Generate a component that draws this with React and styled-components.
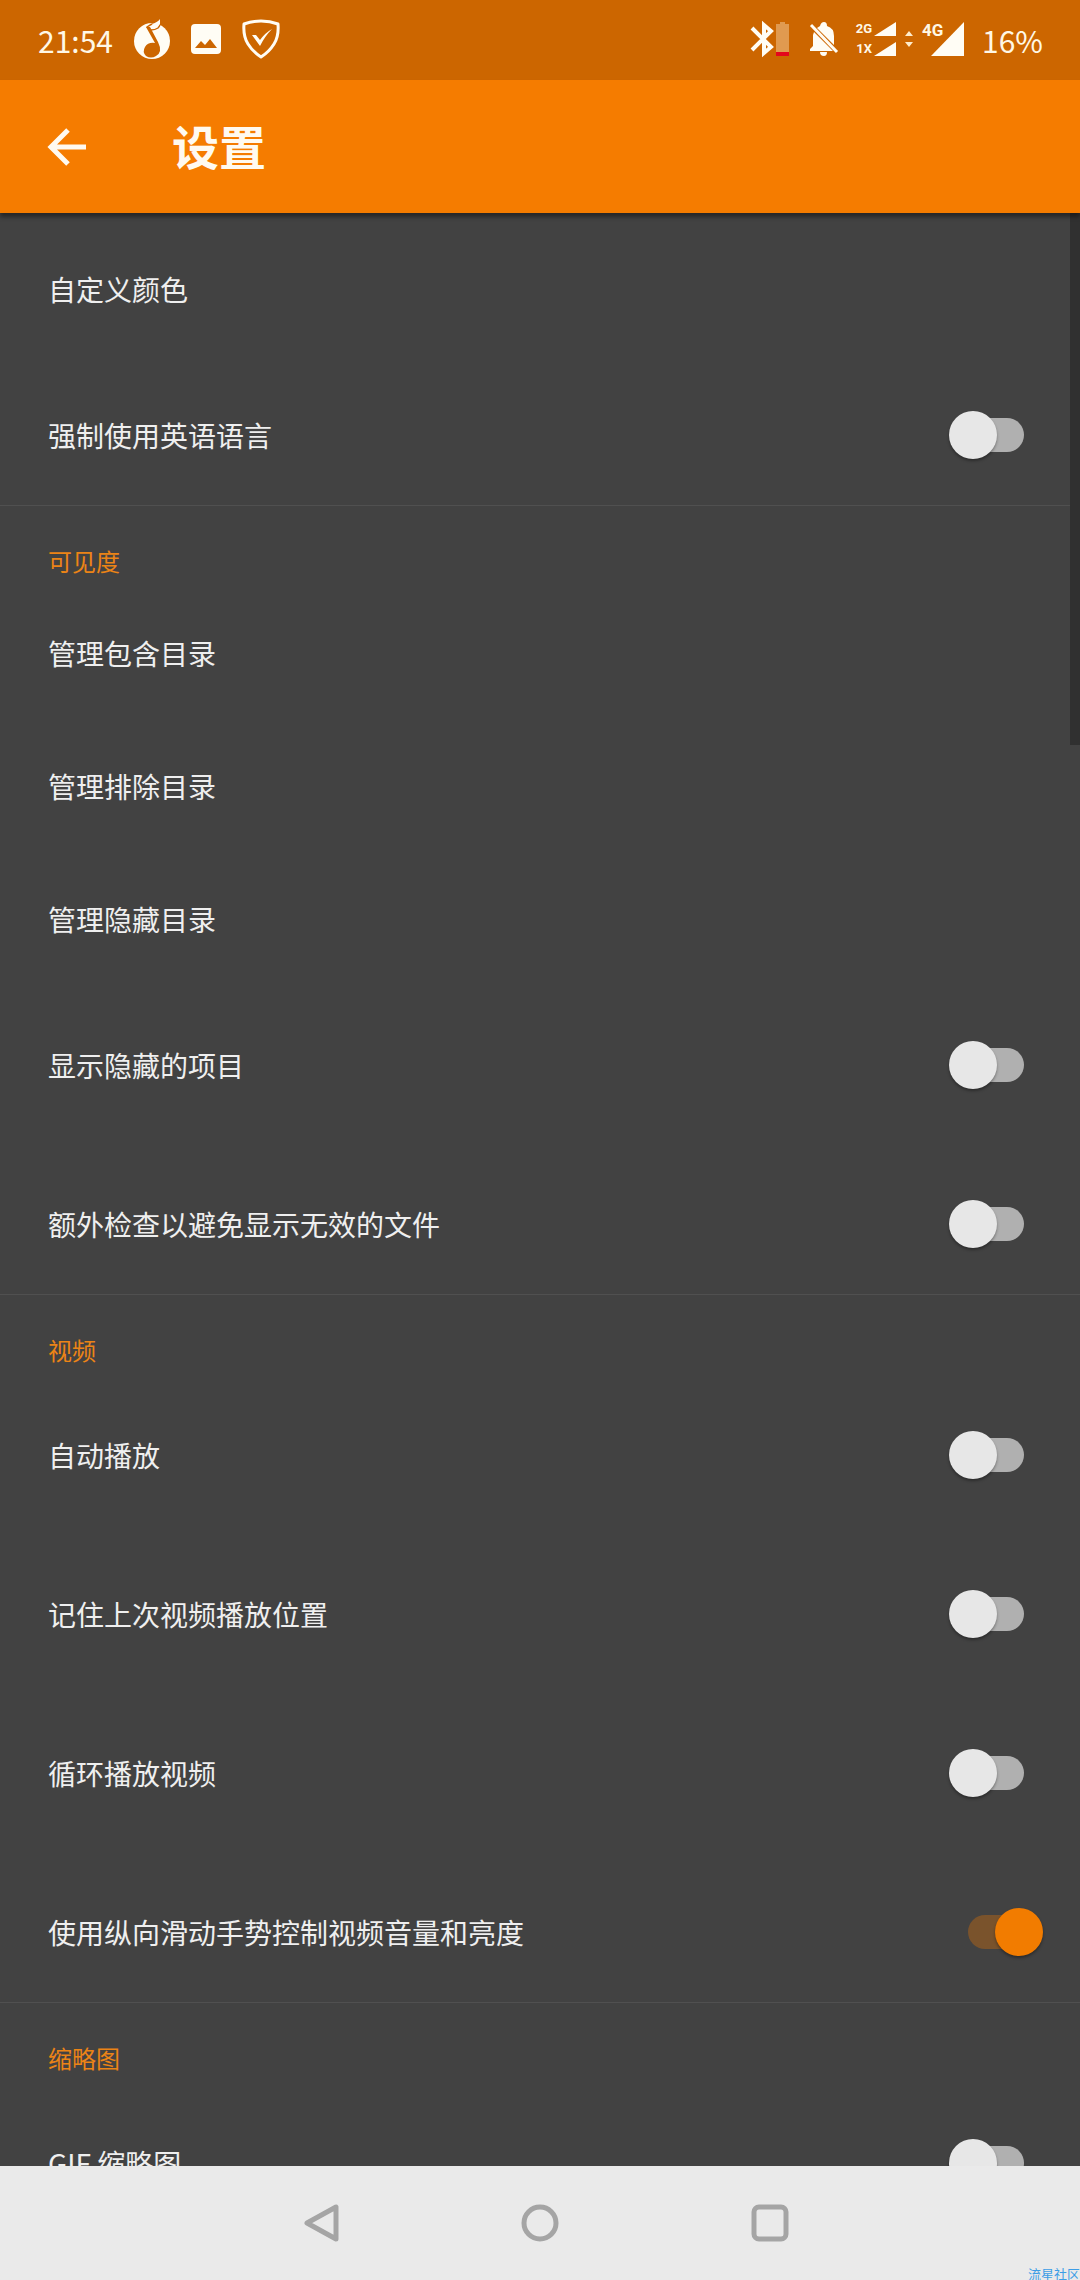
import React from "react";
import styled, { createGlobalStyle } from "styled-components";

const GlobalStyle = createGlobalStyle`
  *, *::before, *::after { box-sizing: border-box; }
  html, body { margin: 0; background: #424242; }
  body { font-family: "Noto Sans CJK SC", "Noto Sans", sans-serif; color: #efefef; }
  button, input { font: inherit; margin: 0; }
`;

const Screen = styled.div`
  position: relative;
  display: flex;
  flex-direction: column;
  height: 100vh;
  overflow: hidden;
`;

const StatusBar = styled.header`
  flex: none;
  display: flex;
  justify-content: space-between;
  align-items: center;
  height: 80px;
  padding: 0 37px 2px 38px;
  background: #cc6600;
  color: #fff8e6;
  font-size: 30px;
  line-height: 40px;
`;

const StatusGroup = styled.div`
  display: flex;
  align-items: center;
  gap: ${(p) => p.$gap}px;
`;

const StatusText = styled.span`
  padding-top: 2px;
`;

const Icon = styled.svg`
  display: block;
  flex: none;
  overflow: visible;
`;

const DualSignal = styled.div`
  display: grid;
  row-gap: 4px;
`;

const SignalLine = styled.div`
  display: flex;
  align-items: center;
  justify-content: flex-end;
  gap: 2px;
  height: 16px;
  font: 700 13px/16px Roboto, sans-serif;
`;

const MainSignal = styled.div`
  position: relative;
  padding-left: 9px;
`;

const NetworkBadge = styled.span`
  position: absolute;
  top: -2px;
  left: 0;
  font: 700 17px/20px Roboto, sans-serif;
`;

const AppBar = styled.div`
  flex: none;
  position: relative;
  z-index: 1;
  display: flex;
  align-items: center;
  gap: 76px;
  height: 133px;
  padding: 0 38px;
  background: #f57c00;
  box-shadow: 0 4px 4px rgba(0, 0, 0, 0.4);
`;

const BackButton = styled.button`
  display: grid;
  place-items: center;
  width: 58px;
  height: 58px;
  padding: 0;
  border: 0;
  background: none;
  color: #fffaf0;
`;

const Title = styled.h1`
  margin: 0;
  padding-bottom: 4px;
  color: #fffaf0;
  font-size: 47px;
  font-weight: 700;
  line-height: 64px;
`;

const Settings = styled.main`
  flex: 1;
  min-height: 0;
  position: relative;
  overflow: hidden;
  padding-top: 10px;
  background: #424242;
`;

const ScrollThumb = styled.div`
  position: absolute;
  top: 0;
  right: 0;
  width: 10px;
  height: 532px;
  background: #303030;
`;

const Section = styled.section`
  & + & { border-top: 1px solid #505050; }
`;

const SectionTitle = styled.h2`
  margin: 0;
  padding: 37px 48px 8px;
  color: #ec8416;
  font-size: 24px;
  font-weight: 400;
  line-height: 36px;
`;

const LinkRow = styled.button`
  display: block;
  width: 100%;
  padding: 46px 48px 47px;
  border: 0;
  background: none;
  color: inherit;
  font-size: 28px;
  line-height: 40px;
  text-align: left;
`;

const SwitchRow = styled.label`
  display: flex;
  align-items: center;
  justify-content: space-between;
  padding: 55px 37px 56px 48px;
  font-size: 28px;
  line-height: 40px;

  &:last-child { padding-bottom: 46px; }
`;

const SwitchInput = styled.input`
  appearance: none;
  flex: none;
  position: relative;
  display: flex;
  align-items: center;
  width: 94px;
  height: 48px;

  &::before {
    content: "";
    position: absolute;
    inset: 7px 19px;
    border-radius: 17px;
    background: #b0b0b0;
  }

  &::after {
    content: "";
    position: relative;
    width: 48px;
    height: 48px;
    border-radius: 50%;
    background: #e7e7e7;
    box-shadow: 0 2px 3px rgba(0, 0, 0, 0.35);
  }

  &:checked { justify-content: flex-end; }
  &:checked::before { background: #7a532c; }
  &:checked::after { background: #f27c00; }
`;

const RowText = styled.span`
  min-width: 0;
`;

const NavBar = styled.nav`
  flex: none;
  display: flex;
  height: 114px;
  padding: 0 18%;
  background: #eaeaea;
`;

const NavButton = styled.button`
  flex: 1;
  display: grid;
  place-items: center;
  padding: 0;
  border: 0;
  background: none;
`;

const Watermark = styled.span`
  position: absolute;
  right: 0;
  bottom: 0;
  color: #3d9de6;
  font-size: 13px;
  line-height: 13px;
`;

const sections = [
  {
    rows: [
      { label: "自定义颜色" },
      { label: "强制使用英语语言", toggle: true },
    ],
  },
  {
    title: "可见度",
    rows: [
      { label: "管理包含目录" },
      { label: "管理排除目录" },
      { label: "管理隐藏目录" },
      { label: "显示隐藏的项目", toggle: true },
      { label: "额外检查以避免显示无效的文件", toggle: true },
    ],
  },
  {
    title: "视频",
    rows: [
      { label: "自动播放", toggle: true },
      { label: "记住上次视频播放位置", toggle: true },
      { label: "循环播放视频", toggle: true },
      { label: "使用纵向滑动手势控制视频音量和亮度", toggle: true, on: true },
    ],
  },
  {
    title: "缩略图",
    rows: [{ label: "GIF 缩略图", toggle: true }],
  },
];

const MusicIcon = () => (
  <Icon width="36" height="40" viewBox="0 0 36 40">
    <circle cx="18" cy="22" r="18" fill="#fffdf5" />
    <path fill="#fffdf5" stroke="#cc6600" strokeWidth="1.5" strokeLinejoin="round" d="M13 8Q17 5 21 4Q25 3 26 1Q27 6 24 9Q21 11 17 11Z" />
    <path fill="#fffdf5" d="M18 5Q24 3 26 0V5Q24 8 20 8Z" />
    <path fill="#cc6600" d="M12 8L16 8L24 23Q29 33 22 37Q17 40 12 37Q8 33 11 28Q14 23 21 24Z" />
  </Icon>
);

const PictureIcon = () => (
  <Icon width="30" height="30" viewBox="0 0 30 30">
    <path fill="#fffdf5" fillRule="evenodd" d="M4 0H26Q30 0 30 4V26Q30 30 26 30H4Q0 30 0 26V4Q0 0 4 0ZM4 24H26L19 15L14 21L10 17Z" />
  </Icon>
);

const ShieldIcon = () => (
  <Icon width="38" height="40" viewBox="0 0 38 40" fill="none" stroke="#fffdf5">
    <path strokeWidth="3" strokeLinejoin="round" d="M2 5Q10 2 19 2Q28 2 36 5Q37 17 32 25Q27 33 19 38Q11 33 6 25Q1 17 2 5Z" />
    <path fill="#fffdf5" stroke="none" d="M10 16L14 16L18 21Q23 14 30 10Q23 17 18 27Z" />
  </Icon>
);

const BluetoothBatteryIcon = () => (
  <Icon width="38" height="36" viewBox="0 0 38 36">
    <path fill="none" stroke="#fffdf5" strokeWidth="4" d="M1 7L20 26L13 32V4L20 10L1 29" />
    <path fill="#e09a50" d="M25 3H29V1H34V3H38V31H25Z" />
    <path fill="#e4061c" d="M25 31H38V35H25Z" />
  </Icon>
);

const MutedBellIcon = () => (
  <Icon width="28" height="34" viewBox="0 0 28 34">
    <path fill="#fffdf5" d="M10 4Q11 0 14 0Q17 0 17 4Q24 6 24 14V23L7 6ZM3 13L4 10L20 26L23 29H0V27L3 24ZM10 30H17Q17 34 14 34Q10 34 10 30Z" />
    <path stroke="#fffdf5" strokeWidth="3" d="M1 3L27 30" />
  </Icon>
);

const SmallSignal = () => (
  <Icon width="22" height="14" viewBox="0 0 22 14">
    <path fill="#fffdf5" d="M22 0V14H0Z" />
  </Icon>
);

function Row({ label, toggle, on }) {
  if (!toggle) return <LinkRow type="button">{label}</LinkRow>;
  return (
    <SwitchRow>
      <RowText>{label}</RowText>
      <SwitchInput type="checkbox" role="switch" defaultChecked={on} />
    </SwitchRow>
  );
}

export default function App() {
  return (
    <Screen>
      <GlobalStyle />
      <StatusBar>
        <StatusGroup $gap={21}>
          <StatusText>21:54</StatusText>
          <MusicIcon />
          <PictureIcon />
          <ShieldIcon />
        </StatusGroup>
        <StatusGroup $gap={18}>
          <StatusGroup $gap={21}>
            <BluetoothBatteryIcon />
            <MutedBellIcon />
          </StatusGroup>
          <StatusGroup $gap={9}>
            <DualSignal>
              <SignalLine>2G<SmallSignal /></SignalLine>
              <SignalLine>1X<SmallSignal /></SignalLine>
            </DualSignal>
            <Icon width="8" height="16" viewBox="0 0 8 16">
              <path fill="#ffeccb" d="M0 5L4 0L8 5ZM0 11L4 16L8 11Z" />
            </Icon>
            <MainSignal>
              <NetworkBadge>4G</NetworkBadge>
              <Icon width="33" height="34" viewBox="0 0 33 34">
                <path fill="#fffdf5" d="M33 0V34H0Z" />
              </Icon>
            </MainSignal>
          </StatusGroup>
          <StatusText>16%</StatusText>
        </StatusGroup>
      </StatusBar>
      <AppBar>
        <BackButton type="button" aria-label="返回">
          <Icon width="38" height="38" viewBox="0 0 38 38" fill="none" stroke="currentColor" strokeWidth="5">
            <path d="M38 19H4M20 2L3 19L20 36" />
          </Icon>
        </BackButton>
        <Title>设置</Title>
      </AppBar>
      <Settings>
        {sections.map((section, i) => (
          <Section key={i}>
            {section.title && <SectionTitle>{section.title}</SectionTitle>}
            {section.rows.map((row) => (
              <Row key={row.label} {...row} />
            ))}
          </Section>
        ))}
        <ScrollThumb />
      </Settings>
      <NavBar>
        <NavButton type="button" aria-label="返回">
          <Icon width="60" height="38" viewBox="0 0 60 38" fill="none" stroke="#a5a5a5" strokeWidth="5" strokeLinejoin="round">
            <path d="M27 19L56 3V35Z" />
          </Icon>
        </NavButton>
        <NavButton type="button" aria-label="主屏幕">
          <Icon width="38" height="38" viewBox="0 0 38 38" fill="none" stroke="#a5a5a5" strokeWidth="5">
            <circle cx="19" cy="19" r="16" />
          </Icon>
        </NavButton>
        <NavButton type="button" aria-label="最近任务">
          <Icon width="38" height="38" viewBox="0 0 38 38" fill="none" stroke="#a5a5a5" strokeWidth="5">
            <rect x="3" y="3" width="32" height="32" rx="5" />
          </Icon>
        </NavButton>
      </NavBar>
      <Watermark>流星社区</Watermark>
    </Screen>
  );
}
